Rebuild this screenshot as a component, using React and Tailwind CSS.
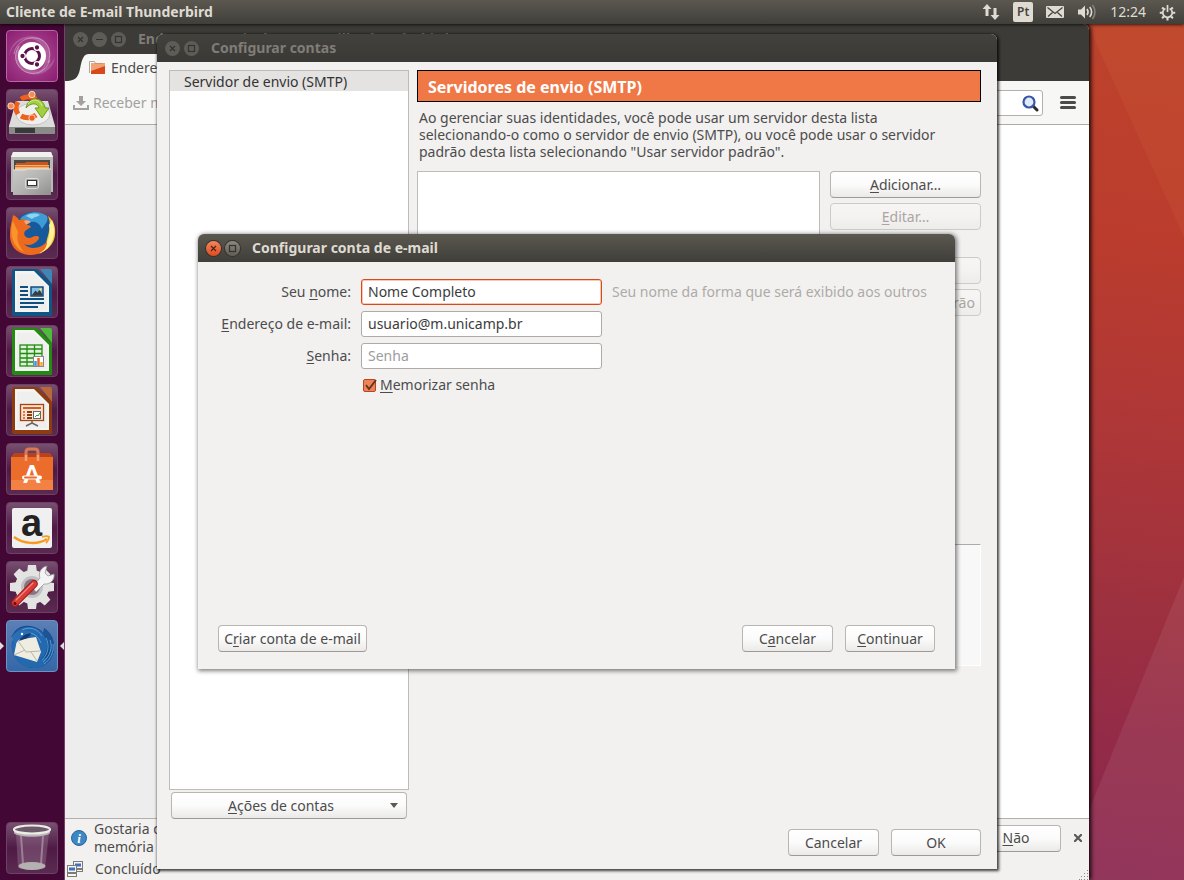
import React from 'react';

const WindowButton = ({ kind, tone = 'dim' }) => {
    const tones = {
        dim: 'bg-[#5e5c57] text-[#34332f]',
        grey: 'bg-linear-to-b from-[#8a887f] to-[#5f5d56] text-[#33322e] shadow-[0_0_0_1px_#33322e]',
        orange: 'bg-linear-to-b from-[#f4845c] to-[#df4a19] text-[#4a2416] shadow-[0_0_0_1px_#33322e]',
    };
    return (
        <button aria-label={kind} className={`size-[15px] shrink-0 rounded-full ${tones[tone]}`}>
            <svg viewBox="0 0 15 15" className="block size-full" fill="none" stroke="currentColor" strokeWidth="1.2">
                {kind === 'close' && <path d="M5 5l5 5M10 5l-5 5" />}
                {kind === 'minimize' && <path d="M4 7.5h7" />}
                {kind === 'maximize' && <rect x="4.5" y="4.5" width="6" height="6" />}
            </svg>
        </button>
    );
};

const PushButton = ({ children, className = '', ...props }) => (
    <button
        className={`h-[27px] rounded-[4px] border border-[#b9b6b1] border-b-[#9d9a95] bg-linear-to-b from-white via-[#fbfbfb] to-[#ebeae8] text-center whitespace-nowrap text-[#4c4c4c] disabled:border-[#cdcbc8] disabled:from-[#f6f5f4] disabled:via-[#f4f3f2] disabled:to-[#edecea] disabled:text-[#a9a6a2] ${className}`}
        {...props}
    >
        {children}
    </button>
);

const Key = ({ children }) => <span className="underline decoration-1 underline-offset-2">{children}</span>;

/* ---------- Top panel ---------- */

const TopPanel = () => (
    <header className="z-10 flex h-6 shrink-0 items-center justify-between bg-linear-to-b from-[#5b5850] to-[#403f3a] pr-2 pl-1.5 text-[#dfdbd2] shadow-[0_1px_3px_rgba(0,0,0,0.7)]">
        <h1 className="text-sm font-bold">Cliente de E-mail Thunderbird</h1>
        <div className="flex items-center gap-[13px]">
            <svg viewBox="0 0 18 18" className="size-[18px]" fill="#dfdbd2">
                <path d="M5 1l4.500 5H6.500v7h-3V6H.5zM13 17l-4.500-5h3V5h3v7h3z" />
            </svg>
            <span className="flex h-5 w-5 items-center justify-center rounded-[2px] bg-[#dfdbd2] text-xs font-semibold text-[#45443f]">Pt</span>
            <svg viewBox="0 0 18 12" className="h-3 w-[18px]">
                <rect width="18" height="12" rx="1" fill="#dfdbd2" />
                <path d="M1.500 1.500L9 7.500l7.500-6M2 10.500l4.500-4M16 10.500l-4.500-4" fill="none" stroke="#45443f" strokeWidth="1.3" />
            </svg>
            <svg viewBox="0 0 20 16" className="h-4 w-5" fill="none" stroke="#dfdbd2" strokeWidth="1.6">
                <path d="M1 5.500h3l4-4v13l-4-4H1z" fill="#dfdbd2" stroke="none" />
                <path d="M10 5c1.300 1.800 1.300 4.200 0 6M12.700 3c2.300 3 2.300 7 0 10" />
                <path d="M15.500 1c3.300 4.200 3.300 9.800 0 14" stroke="#85827b" />
            </svg>
            <time className="text-sm">12:24</time>
            <svg viewBox="0 0 18 18" className="size-[17px]" fill="none" stroke="#dfdbd2">
                <path d="M6.800 4.700a5 5 0 1 0 4.400 0" strokeWidth="1.800" />
                <path d="M9 1v7.500" strokeWidth="1.800" />
                <path d="M3.300 3.600l1.800 1.800M14.700 3.600l-1.800 1.800M.8 9.200h3M17.200 9.200h-3M3.300 15l1.800-1.800M14.700 15l-1.800-1.800M9 17.500v-3" strokeWidth="2.200" />
            </svg>
        </div>
    </header>
);

/* ---------- Launcher ---------- */

const DashIcon = () => (
    <>
        <path d="M3 26C4 12 18 2 34 8c10 5 13 16 8 26-2 3-5 6-8 7 8-8 8-20 1-27C25 4 8 8 3 26z" fill="#fff" fillOpacity=".18" />
        <path d="M49 27c-2 14-16 22-30 15C8 36 6 24 14 14c-3 10 0 20 9 25 9 4 20 0 26-12z" fill="#fff" fillOpacity=".18" />
        <path d="M8 24C10 12 22 5 34 9c9 4 12 14 8 24M44 30c-3 11-15 17-26 11C9 35 7 25 13 16" fill="none" stroke="#fff" strokeOpacity=".35" />
        <circle cx="26" cy="26" r="14" fill="#fff" />
        <circle cx="26" cy="26" r="7.500" fill="none" stroke="#5c1249" strokeWidth="3" />
        <g fill="#5c1249" stroke="#fff" strokeWidth="1.300">
            <circle cx="16.500" cy="26" r="2.800" />
            <circle cx="31" cy="17.500" r="2.800" />
            <circle cx="31" cy="34.500" r="2.800" />
        </g>
    </>
);

const InstallIcon = () => (
    <>
        <path d="M10 12h32l7 25v6q0 2-2 2H5q-2 0-2-2v-6z" fill="#dcdcda" />
        <path d="M3 38h46v5q0 2-2 2H5q-2 0-2-2z" fill="#8a8a88" />
        <path d="M9 39h20v5H9z" fill="#3a3a3a" />
        <ellipse cx="27" cy="25" rx="17" ry="11" fill="#efefed" stroke="#c4c4c2" />
        <g fill="none" stroke="#f0601c" strokeWidth="5">
            <path d="M12 13a11 11 0 0 0 0 12" />
            <path d="M15 27a12 10 0 0 0 15-1" />
            <path d="M15 10a12 10 0 0 1 15 0" />
        </g>
        <circle cx="26" cy="5.500" r="3.200" fill="#f58b4c" stroke="#fff" strokeWidth=".7" />
        <circle cx="5" cy="17" r="3.200" fill="#f58b4c" stroke="#fff" strokeWidth=".7" />
        <circle cx="26" cy="29" r="3.200" fill="#f0601c" stroke="#fff" strokeWidth=".7" />
        <path d="M20 19c2-12 17-12 19 0h4l-7 10-7-10h4c-1-5-8-6-13 0z" fill="#a4cf3f" stroke="#6d9a1d" />
        <path d="M22 15c4-6 12-5 14 2" fill="none" stroke="#d4ec92" />
    </>
);

const FilesIcon = () => (
    <>
        <defs>
            <linearGradient id="drawer" x1="0" y1="0" x2="1" y2="1">
                <stop offset="0" stopColor="#c9c9c7" />
                <stop offset=".5" stopColor="#b4b4b2" />
                <stop offset="1" stopColor="#8f8f8d" />
            </linearGradient>
        </defs>
        <path d="M7 4h38l2 5v35H5V9z" fill="#b9b9b7" />
        <path d="M7 4h38l2 5H5z" fill="#f1f1f0" />
        <path d="M8 12h36v12H8z" fill="#4b4a48" />
        <path d="M10 15h9l1-1h22v9H10z" fill="#c8551d" />
        <path d="M9 17h34v5H9z" fill="#f6c48d" />
        <path d="M9 18.500h34" stroke="#e0752c" strokeWidth="1.500" />
        <path d="M7 22h12l2-1h24v26H7z" fill="url(#drawer)" />
        <path d="M7 22h12l2-1h24" fill="none" stroke="#e2e2e0" />
        <rect x="19.500" y="30.500" width="13" height="10" rx="2" fill="#a3a3a1" stroke="#dededc" />
        <rect x="21.500" y="32.500" width="9" height="5" fill="#fff" stroke="#333" />
    </>
);

const FirefoxIcon = () => (
    <>
        <circle cx="27" cy="25" r="20" fill="#175a9c" />
        <path d="M14 12c6-8 20-9 27-3 2 5-2 8-5 13-3-7-8-8-12-7z" fill="#3d9bd6" />
        <path d="M20 9c4-3 10-3 14-1-3 2-6 2-8 4z" fill="#8fd2f2" />
        <path d="M42 9c6 5 8 12 7 19-1 11-11 19-22 19 8-3 13-8 14-15 3-9 4-16 1-23z" fill="#fbc52e" />
        <path d="M46 13c5 13 1 28-13 34 9-9 12-20 10-29z" fill="#fff09a" />
        <path d="M7 8c3 1 5 3 6 5 3-1 5-1 8 0-1 2-2 4-1 5 2 0 4 0 5 2l-6 4c-2 3 0 7 4 7 3 0 4-2 7-2s4 2 2 4c-4 5-10 6-14 4 6 7 19 4 23-3 1 9-9 15-18 14C10 47 3 38 4 26c0-7 2-12 3-18z" fill="#ee6a1f" />
        <path d="M7 14C3 25 6 40 18 45c-5-6-8-12-6-20z" fill="#f9932b" />
        <path d="M18 14c2-1 5-1 7 1l-5 3z" fill="#f7a57a" />
    </>
);

const OfficeDoc = ({ dark, light, children }) => (
    <>
        <path d="M9 3h22l15 15v31q0 1-1 1H8q-2 0-2-2V5q0-2 3-2z" fill={dark} />
        <path d="M34 3h10q2 0 2 2v13z" fill={light} />
        <path d="M9 5h19l15 15v26H9z" fill="#f4f4f3" />
        <path d="M11 8h17l13 13v23H11z" fill="#e9e9e8" fillOpacity=".5" />
        {children}
    </>
);

const WriterIcon = () => (
    <OfficeDoc dark="#0f5687" light="#3c87b8">
        <path d="M14 21h8M14 25h8M14 29h8M14 33h24M14 37h24M14 41h18" stroke="#0f4f80" strokeWidth="2" />
        <rect x="25" y="21" width="12" height="9" fill="#7fc0ea" stroke="#0f4f80" strokeWidth="1.500" />
        <path d="M25.500 29.500l4-5 2 2 2-3 3.500 6z" fill="#3c3c3c" />
        <circle cx="34.500" cy="23.500" r="1.200" fill="#f8e36c" />
    </OfficeDoc>
);

const CalcIcon = () => (
    <OfficeDoc dark="#238a12" light="#4fbb3d">
        <rect x="14" y="20" width="22" height="21" fill="#dff2da" stroke="#238a12" strokeWidth="1.300" />
        <path d="M14 24h22M14 28.500h22M14 33h22M14 37h22M21 20v21M28.500 20v21" stroke="#238a12" strokeWidth="1.300" />
        <rect x="27.500" y="31.500" width="10" height="10" fill="#fff" stroke="#888" />
        <path d="M29.500 41v-5" stroke="#2ba0e0" strokeWidth="2.500" />
        <path d="M32.500 41v-8" stroke="#e8642a" strokeWidth="2.500" />
        <path d="M35.500 41v-4" stroke="#f2ac2e" strokeWidth="2.500" />
    </OfficeDoc>
);

const ImpressIcon = () => (
    <OfficeDoc dark="#8c3c0f" light="#b7693a">
        <rect x="14.500" y="20.500" width="23" height="16" fill="#f8e3d5" stroke="#a5440f" strokeWidth="1.300" />
        <path d="M17 24h18" stroke="#d0601f" strokeWidth="2" />
        <path d="M17 28h2M17 31h2M17 34h2" stroke="#f0783f" strokeWidth="2" />
        <path d="M21 28h5M21 31h5M21 34h5" stroke="#8c3c0f" strokeWidth="2" />
        <rect x="27.500" y="27.500" width="7" height="7" fill="#fff" stroke="#666" />
        <path d="M29 33l2-2 1 1 2-3" fill="none" stroke="#2f9a2f" />
        <path d="M26 37v2l-6 3M26 39l6 3" fill="none" stroke="#666" strokeWidth="1.500" />
    </OfficeDoc>
);

const SoftwareIcon = () => (
    <>
        <path d="M5 14h42l-3-4H8z" fill="#b8431a" />
        <path d="M20 19V9q0-3 3-3h6q3 0 3 3v10" fill="none" stroke="#d97852" strokeWidth="3" />
        <path d="M5 14h42v33H5z" fill="#ec6c2b" />
        <path d="M5 37h42v10H5z" fill="#f38143" />
        <path d="M20 18V12M32 18V12" stroke="#f4a07a" strokeWidth="2.500" />
        <text x="26" y="40" textAnchor="middle" fontFamily="Lato" fontWeight="900" fontSize="24" fill="#fff">A</text>
        <path d="M18 34.500h16" stroke="#fff" strokeWidth="4" strokeLinecap="round" />
        <path d="M19 34.500h11" stroke="#ec6c2b" strokeWidth="2" strokeLinecap="round" />
    </>
);

const AmazonIcon = () => (
    <>
        <rect x="6" y="6" width="40" height="40" rx="2" fill="#f0f0f0" />
        <text x="25.500" y="33.500" textAnchor="middle" fontFamily="Liberation Sans" fontWeight="bold" fontSize="38" fill="#222">a</text>
        <path d="M8 35c9 7 24 8 33 2" fill="none" stroke="#f79b1e" strokeWidth="2.500" />
        <path d="M36 35c3-1 6-1 7 0 0 2-1 4-3 6" fill="none" stroke="#f79b1e" strokeWidth="1.800" />
    </>
);

const SettingsIcon = () => (
    <>
        <g fill="#e3e3e2">
            <circle cx="26" cy="26" r="17" />
            <path d="M22 4h8l1 8H21zM22 48h8l1-8H21zM4 22v8l8 1V21zM48 22v8l-8 1V21z" />
            <path d="M22 4h8l1 8H21zM22 48h8l1-8H21zM4 22v8l8 1V21zM48 22v8l-8 1V21z" transform="rotate(45 26 26)" />
        </g>
        <circle cx="26" cy="26" r="11" fill="#c2c0c1" />
        <circle cx="26" cy="26" r="8" fill="#8a7286" />
        <path d="M26 26l8-9c-2-5 1-11 7-12l-2 7 3 3 6-2c1 6-4 11-10 10l-8 8z" fill="#f4f4f4" stroke="#999" strokeWidth=".8" />
        <path d="M9 42l19-19" stroke="#a51919" strokeWidth="7.500" strokeLinecap="round" />
        <path d="M9 42l19-19" stroke="#dc3a34" strokeWidth="5.500" strokeLinecap="round" />
        <path d="M10 39l17-17" stroke="#f08a84" strokeWidth="1.200" strokeLinecap="round" />
        <circle cx="9" cy="42.500" r="1.500" fill="#601010" />
    </>
);

const ThunderbirdIcon = () => (
    <>
        <path d="M6 22C4 35 13 47 28 48c12 0 21-9 20-22 0-8-4-14-10-18 2 3 2 5 1 7C33 5 17 2 9 11L5 17l5-1z" fill="#164a8a" />
        <path d="M9 13C16 4 31 5 38 15c6 9 3 20-4 25 9-2 14-8 14-15 1 13-8 23-20 23C14 47 4 37 6 23z" fill="#2468ae" />
        <path d="M37 13c8 8 9 20 1 31 8-4 11-12 10-19-1-8-5-14-10-17z" fill="#1c5596" />
        <path d="M16 10c8-4 16-1 20 6M20 13c7-1 12 3 15 10M40 18c4 8 2 16-4 22M44 20c3 8 0 16-7 22M47 24c1 8-2 15-9 20" fill="none" stroke="#58a5de" strokeWidth=".9" />
        <path d="M11 20l19-3 5 15-4 10-23-7z" fill="#efece2" />
        <path d="M12 21l8 11 14-1M8 35l11-5M31 41l-6-9" fill="none" stroke="#b9b5a8" />
        <path d="M6 16c5-6 13-7 19-3-6 0-10 4-13 8l-3 3c-2-2-2-5-3-8z" fill="#2a6fb5" />
        <path d="M13 21c2-4 6-7 12-8-1 4-5 6-9 7z" fill="#123c74" />
        <circle cx="16" cy="14" r="1.200" fill="#fff" />
    </>
);

const TrashIcon = () => (
    <>
        <path d="M10 11h33l-4 35q-13 4-27 0z" fill="#a58aa0" fillOpacity=".35" />
        <path d="M15 14l2 28M37 14l-2 28" stroke="#c9b9c5" strokeOpacity=".5" strokeWidth="2" />
        <ellipse cx="26" cy="44" rx="13.500" ry="4" fill="#b3b2b0" />
        <path d="M8 7v4c4 5 32 5 36 0V7z" fill="#b8b8b5" />
        <ellipse cx="26" cy="7.500" rx="18" ry="4" fill="#6d5a69" stroke="#ecebe8" strokeWidth="2.200" />
    </>
);

const apps = [
    { name: 'Pesquisar', icon: <DashIcon />, tile: 'bg-radial from-[#b0519b] to-[#8c1a70] border-[#b765a5]' },
    { name: 'Instalar', icon: <InstallIcon /> },
    { name: 'Arquivos', icon: <FilesIcon /> },
    { name: 'Firefox', icon: <FirefoxIcon /> },
    { name: 'Writer', icon: <WriterIcon /> },
    { name: 'Calc', icon: <CalcIcon /> },
    { name: 'Impress', icon: <ImpressIcon /> },
    { name: 'Programas', icon: <SoftwareIcon /> },
    { name: 'Amazon', icon: <AmazonIcon /> },
    { name: 'Configurações', icon: <SettingsIcon /> },
    { name: 'Thunderbird', icon: <ThunderbirdIcon />, tile: 'bg-linear-to-b from-[#5c7fb5] to-[#3467a8] border-[#6f92c4]', active: true },
];

const LauncherItem = ({ name, icon, tile = 'bg-linear-to-b from-[#775070] via-[#4f1a45] to-[#5a2b50] border-[#6d4065]', active }) => (
    <li className="relative flex justify-center">
        <button aria-label={name} className={`size-[52px] rounded-[4px] border ${tile}`}>
            <svg viewBox="1 1 50 50" className="block size-full overflow-visible">{icon}</svg>
        </button>
        {active && (
            <>
                <span className="absolute top-[22px] left-0 border-y-4 border-l-4 border-y-transparent border-l-[#dedede]" />
                <span className="absolute top-[22px] right-0 border-y-4 border-r-4 border-y-transparent border-r-[#dedede]" />
            </>
        )}
    </li>
);

const Launcher = () => (
    <nav className="flex w-[65px] shrink-0 flex-col justify-between border-r border-[#7a3f6e] bg-[#430735] py-1.5">
        <ul className="flex flex-col gap-[7px]">
            {apps.map((app) => <LauncherItem key={app.name} {...app} />)}
        </ul>
        <ul>
            <LauncherItem name="Lixeira" icon={<TrashIcon />} />
        </ul>
    </nav>
);

/* ---------- Mail window ---------- */

const MailWindow = () => (
    <section className="absolute inset-y-0 right-[95px] left-0 flex flex-col overflow-hidden rounded-tr-[6px] bg-[#f2f1f0] shadow-[2px_0_4px_rgba(0,0,0,0.9)]">
        <div className="flex h-[30px] shrink-0 items-center gap-1 bg-[#3c3b37] pl-2">
            <WindowButton kind="close" />
            <WindowButton kind="minimize" />
            <WindowButton kind="maximize" />
            <h2 className="pl-2 text-sm font-bold text-[#807d78]">Endereços particulares - Mozilla Thunderbird</h2>
        </div>
        <div className="flex h-[27px] shrink-0 bg-[#3c3b37]">
            <svg viewBox="0 0 24 27" className="h-full w-6 shrink-0">
                <path d="M0 27c9 0 13-2 15-12C17 4 19 0 24 0v27z" fill="#f7f7f6" />
            </svg>
            <div className="flex w-60 items-center gap-1.5 bg-[#f7f7f6] text-sm text-[#4c4c4c]">
                <svg viewBox="0 0 16 15" className="h-[15px] w-4">
                    <path d="M.5 13V1.500h5l1 2h7V5" fill="#fff" stroke="#a9a6a1" />
                    <path d="M2 3.500h14V14H2z" fill="#d9481a" />
                    <path d="M2 3.500h14V6L2 11z" fill="#f2a173" />
                </svg>
                <span>Endereço</span>
            </div>
        </div>
        <div className="flex h-11 shrink-0 items-center justify-between border-b border-[#aeaba6] bg-[#f7f7f6] pr-3 pl-2">
            <button className="flex items-center gap-1 text-sm text-[#a3a19e]">
                <svg viewBox="0 0 16 14" className="h-3.5 w-4" fill="#a3a19e">
                    <path d="M6 0h4v5h3L8 10 3 5h3zM0 9h2v3h12V9h2v5H0z" />
                </svg>
                <span>Receber mensagens</span>
            </button>
            <div className="flex items-center gap-4">
                <label className="flex h-[26px] w-60 items-center rounded-[3px] border border-[#b3b0ab] bg-white pr-[3px]">
                    <input aria-label="Pesquisar" className="min-w-0 flex-1 outline-none" />
                    <svg viewBox="0 0 18 18" className="size-[18px]" fill="none">
                        <path d="M11 11l5 5" stroke="#2b2b2b" strokeWidth="3" strokeLinecap="round" />
                        <circle cx="8" cy="8" r="5.500" fill="#dfeafa" stroke="#3a55a8" strokeWidth="2.200" />
                    </svg>
                </label>
                <button aria-label="Menu" className="flex w-[18px] flex-col items-center gap-0.5">
                    <span className="h-[3px] w-4 rounded-sm bg-[#4c4c4c]" />
                    <span className="h-[3px] w-4 rounded-sm bg-[#4c4c4c]" />
                    <span className="h-[3px] w-4 rounded-sm bg-[#4c4c4c]" />
                </button>
            </div>
        </div>
        <div className="flex flex-1">
            <div className="w-60 bg-[#ededed]" />
            <div className="flex-1 bg-white" />
        </div>
        <div className="flex h-[41px] shrink-0 items-center border-t border-[#b3b0ab] pr-1 pb-0.5 pl-1.5">
            <svg viewBox="0 0 16 16" className="size-4 shrink-0">
                <circle cx="8" cy="8" r="7.500" fill="#3d87c4" stroke="#2a659b" />
                <text x="8" y="12.500" textAnchor="middle" fontFamily="Liberation Serif" fontStyle="italic" fontWeight="bold" fontSize="13" fill="#fff">i</text>
            </svg>
            <p className="ml-[7px] w-40 text-sm leading-[18px] text-[#4c4c4c]">Gostaria de ajudar memória</p>
            <PushButton className="ml-auto w-[90px] text-sm"><Key>N</Key>ão</PushButton>
            <button aria-label="Fechar" className="ml-2.5 p-[3px] text-[#5a5955]">
                <svg viewBox="0 0 8 8" className="size-2" stroke="currentColor" strokeWidth="2.200">
                    <path d="M0 0l8 8M8 0L0 8" />
                </svg>
            </button>
        </div>
        <footer className="flex h-[21px] shrink-0 items-center justify-between pl-0.5 text-sm text-[#4c4c4c]">
            <div className="flex items-center gap-3 pb-0.5">
                <svg viewBox="0 0 16 16" className="size-4" fill="#f4f4f4" stroke="#7d7b77">
                    <rect x="6.500" y=".5" width="9" height="7" />
                    <path d="M8 2.500h6v3H8z" fill="#3f6fc0" stroke="none" />
                    <rect x="7.500" y="8.500" width="8" height="2" />
                    <rect x=".5" y="4.500" width="9" height="7" />
                    <path d="M2 6.500h6v3H2z" fill="#3f6fc0" stroke="none" />
                    <rect x=".5" y="12.500" width="9" height="3" />
                </svg>
                <span>Concluído</span>
            </div>
            <svg viewBox="0 0 10 10" className="size-2.5 self-end" fill="#8b8883">
                <path d="M8 0h1v1H8zM5 3h1v1H5zM8 3h1v1H8zM2 6h1v1H2zM5 6h1v1H5zM8 6h1v1H8zM0 9h1v1H0zM2 9h1v1H2zM5 9h1v1H5zM8 9h1v1H8z" />
            </svg>
        </footer>
    </section>
);

/* ---------- Account settings dialog ---------- */

const AccountsDialog = () => (
    <section className="absolute top-2.5 left-[92px] flex h-[835px] w-[840px] flex-col rounded-t-[6px] bg-[#f2f1f0] text-sm text-[#4c4c4c] shadow-[1px_1px_3px_1px_rgba(0,0,0,0.75)]">
        <div className="flex h-7 shrink-0 items-center gap-1 rounded-t-[6px] bg-linear-to-b from-[#42413c] to-[#3a3935] pl-2">
            <WindowButton kind="close" />
            <WindowButton kind="maximize" />
            <h2 className="pl-2 font-bold text-[#807d78]">Configurar contas</h2>
        </div>
        <div className="flex flex-1 gap-2 pt-2 pr-4 pl-3">
            <div className="flex w-60 flex-col gap-0.5">
                <ul className="flex-1 border border-[#bfbcb8] bg-white text-[#333]">
                    <li className="h-5 bg-[#e4e3e1] pl-3.5 leading-[22px]">Servidor de envio (SMTP)</li>
                </ul>
                <PushButton className="mx-0.5 flex items-center pr-2">
                    <span className="flex-1"><Key>A</Key>ções de contas</span>
                    <svg viewBox="0 0 8 5" className="h-[5px] w-2" fill="#5a5955"><path d="M0 0h8L4 5z" /></svg>
                </PushButton>
            </div>
            <div className="flex flex-1 flex-col">
                <h3 className="h-8 border border-black bg-[#f07746] pl-2.5 text-base leading-8 font-bold text-white">Servidores de envio (SMTP)</h3>
                <p className="mt-[7px] px-0.5 leading-[17px]">
                    Ao gerenciar suas identidades, você pode usar um servidor desta lista<br />
                    selecionando-o como o servidor de envio (SMTP), ou você pode usar o servidor<br />
                    padrão desta lista selecionando "Usar servidor padrão".
                </p>
                <div className="mt-[11px] flex h-[350px] gap-2.5">
                    <ul className="flex-1 border border-[#bfbcb8] bg-white" />
                    <div className="flex w-[151px] flex-col gap-[5px]">
                        <PushButton><Key>A</Key>dicionar…</PushButton>
                        <PushButton disabled><Key>E</Key>ditar…</PushButton>
                        <PushButton disabled className="mt-[22px]">Remover</PushButton>
                        <PushButton disabled>Usar servidor padrão</PushButton>
                    </div>
                </div>
                <div className="mt-[23px] h-[122px] border border-white border-t-[#aeaba6] bg-[#f8f8f8]" />
            </div>
        </div>
        <div className="flex justify-end gap-3 pt-2.5 pr-4 pb-[13px]">
            <PushButton className="w-[91px]">Cancelar</PushButton>
            <PushButton className="w-[90px]">OK</PushButton>
        </div>
    </section>
);

/* ---------- New mail account dialog ---------- */

const fieldClass = 'h-[26px] w-full rounded-[3px] border border-[#aeaba6] bg-white px-1.5 pb-0.5 text-[#3c3c3c] outline-none placeholder:text-[#9d9d9d]';

const NewAccountDialog = () => (
    <section className="absolute top-[210px] left-[133px] flex h-[435px] w-[757px] flex-col rounded-t-[6px] bg-[#f2f1f0] text-sm text-[#4c4c4c] shadow-[1px_1px_4px_1px_rgba(0,0,0,0.5)]">
        <div className="flex h-7 shrink-0 items-center gap-1 rounded-t-[6px] bg-linear-to-b from-[#5b5850] to-[#3f3e39] pl-2">
            <WindowButton kind="close" tone="orange" />
            <WindowButton kind="maximize" tone="grey" />
            <h2 className="pl-2 font-bold text-[#dfdbd2]">Configurar conta de e-mail</h2>
        </div>
        <form className="flex flex-1 flex-col px-5 py-[17px]" onSubmit={(e) => e.preventDefault()}>
            <div className="grid grid-cols-[133px_241px_1fr] items-center gap-x-2.5 gap-y-1.5 whitespace-nowrap">
                <label htmlFor="name" className="text-right">Seu <Key>n</Key>ome:</label>
                <input id="name" defaultValue="Nome Completo" className={`${fieldClass} border-[#dd4814]! shadow-[inset_0_0_0_1px_#f5c9b8]`} />
                <span className="text-[#aeaba7]">Seu nome da forma que será exibido aos outros</span>
                <label htmlFor="email" className="text-right"><Key>E</Key>ndereço de e-mail:</label>
                <input id="email" type="email" defaultValue="usuario@m.unicamp.br" className={fieldClass} />
                <span />
                <label htmlFor="password" className="text-right"><Key>S</Key>enha:</label>
                <input id="password" type="password" placeholder="Senha" className={fieldClass} />
                <span />
                <label className="col-start-2 flex items-center gap-1 pl-0.5">
                    <span className="relative size-[13px]">
                        <input type="checkbox" defaultChecked className="block size-[13px] appearance-none rounded-[2px] border border-[#b5471e] bg-[#f08258]" />
                        <svg viewBox="0 0 13 13" className="pointer-events-none absolute inset-0 size-[13px] overflow-visible" fill="none" stroke="#5a3324" strokeWidth="1.800">
                            <path d="M3 6l3 4L13 1" />
                        </svg>
                    </span>
                    <span><Key>M</Key>emorizar senha</span>
                </label>
            </div>
            <div className="mt-auto flex gap-3">
                <PushButton className="mr-auto w-[149px]">C<Key>r</Key>iar conta de e-mail</PushButton>
                <PushButton className="w-[91px]">C<Key>a</Key>ncelar</PushButton>
                <PushButton className="w-[90px]"><Key>C</Key>ontinuar</PushButton>
            </div>
        </form>
    </section>
);

const Wallpaper = () => (
    <svg viewBox="0 0 95 856" preserveAspectRatio="none" className="absolute inset-y-0 right-0 h-full w-[95px]">
        <defs>
            <linearGradient id="wall" gradientUnits="userSpaceOnUse" x1="95" y1="0" x2="0" y2="856">
                <stop offset="0" stopColor="#bd432c" />
                <stop offset=".25" stopColor="#bb3c2d" />
                <stop offset=".5" stopColor="#ac3638" />
                <stop offset=".7" stopColor="#9c3040" />
                <stop offset=".82" stopColor="#942b47" />
                <stop offset="1" stopColor="#8a2650" />
            </linearGradient>
        </defs>
        <path d="M0 0h95v856H0z" fill="url(#wall)" />
        <path d="M0 0h95v213L2 8z" fill="#d9703c" fillOpacity=".15" />
        <path d="M95 553L0 786v70h95z" fill="#fff" fillOpacity=".07" />
    </svg>
);

const App = () => (
    <div className="flex h-screen flex-col overflow-hidden bg-[#a83538] font-['Noto_Sans',sans-serif]">
        <TopPanel />
        <div className="flex min-h-0 flex-1">
            <Launcher />
            <main className="relative flex-1 overflow-hidden">
                <Wallpaper />
                <MailWindow />
                <AccountsDialog />
                <NewAccountDialog />
            </main>
        </div>
    </div>
);

export default App;
